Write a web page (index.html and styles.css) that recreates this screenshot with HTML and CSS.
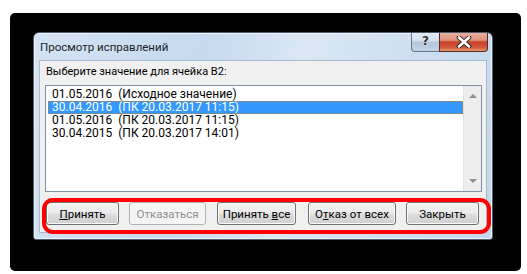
FILE: index.html
```html
<html>
<head>
  <title>Просмотр исправлений</title>
  <link rel="stylesheet" href="styles.css">
</head>
<body>
  <div class="backdrop">
    <div class="dialog">
      <div class="titlebar">
        <span class="title">Просмотр исправлений</span>
        <div class="caption-buttons">
          <div class="help-btn">?</div>
          <div class="close-btn">
            <svg width="20" height="12" viewBox="0 0 20 12">
              <path d="M5 1.5 L15 10.5 M15 1.5 L5 10.5" stroke="#3a2a2a" stroke-width="4.6" stroke-linecap="round"/>
              <path d="M5 1.5 L15 10.5 M15 1.5 L5 10.5" stroke="#ffffff" stroke-width="2.6" stroke-linecap="round"/>
            </svg>
          </div>
        </div>
      </div>

      <div class="panel">
        <div class="prompt">Выберите значение для ячейка B2:</div>
        <div class="listbox">
          <div class="items">
            <div class="item">01.05.2016&nbsp; (Исходное значение)</div>
            <div class="item selected">30.04.2016&nbsp; (ПК 20.03.2017 11:15)</div>
            <div class="item">01.05.2016&nbsp; (ПК 20.03.2017 11:15)</div>
            <div class="item">30.04.2015&nbsp; (ПК 20.03.2017 14:01)</div>
          </div>
          <div class="scrollbar">
            <span class="arrow up"></span>
            <span class="arrow down"></span>
          </div>
        </div>
        <div class="buttons">
          <button class="btn btn-accept"><u>П</u>ринять</button>
          <button class="btn btn-reject" disabled>Отказаться</button>
          <button class="btn btn-accept-all">Принять <u>в</u>се</button>
          <button class="btn btn-reject-all">О<u>т</u>каз от всех</button>
          <button class="btn btn-close">Закрыть</button>
        </div>
      </div>

      <div class="highlight-box"></div>
    </div>
  </div>
</body>
</html>
```

FILE: styles.css
```css
body {
  margin: 0;
  background-color: #ffffff;
  font-family: Roboto, "Noto Sans", sans-serif;
  font-size: 12px;
  color: #000000;
}

.backdrop {
  margin: 13px 0 0 10px;
  width: 488px;
  height: 239px;
  padding: 19px 0 0 23px;
  background-color: #000000;
  border-radius: 5px;
}

.dialog {
  position: relative;
  width: 458px;
  height: 206px;
  background: linear-gradient(100deg, #d4e3f3 0%, #c6d9ee 35%, #d9e7f5 55%, #c3d7ec 100%);
  border: 1px solid #4f5d6e;
  border-radius: 6px 6px 3px 3px;
  box-shadow: inset 0 0 0 1px #eef4fb;
}

.titlebar {
  display: flex;
  justify-content: space-between;
  height: 27px;
}

.title {
  padding: 6px 0 0 6px;
  font-size: 11.5px;
  line-height: 16px;
  color: #1e1e1e;
}

.caption-buttons {
  display: flex;
  margin-right: 4px;
  height: 18px;
}

.help-btn {
  width: 27px;
  height: 18px;
  border: 1px solid #66788e;
  border-top: none;
  border-right: none;
  border-radius: 0 0 0 4px;
  background: linear-gradient(#e3ebf4 0%, #d3dfec 45%, #b3c6dd 50%, #c4d4e6 100%);
  text-align: center;
  font-family: "DejaVu Sans", sans-serif;
  font-weight: bold;
  font-size: 12px;
  line-height: 17px;
  color: #2b2f38;
  text-shadow: 0 0 1px #ffffff, 0 0 1px #ffffff;
}

.close-btn {
  display: flex;
  align-items: center;
  justify-content: center;
  width: 47px;
  height: 18px;
  border: 1px solid #5a2a24;
  border-top: none;
  border-radius: 0 0 4px 0;
  background: linear-gradient(#eab2a2 0%, #e0907a 40%, #c8412b 50%, #d2583c 80%, #e59a6c 100%);
}

.panel {
  margin: 0 5px;
  height: 171px;
  padding: 0 5px;
  background-color: #f0f0f0;
  border: 1px solid #a9bacb;
}

.prompt {
  padding: 3px 0 0 1px;
  height: 21px;
  font-size: 11px;
  line-height: 16px;
}

.listbox {
  display: flex;
  width: 435px;
  height: 105px;
  background-color: #ffffff;
  border: 1px solid #828fa0;
}

.items {
  flex: 1;
  padding: 2px 0 0 2px;
}

.item {
  height: 13px;
  padding-left: 4px;
  font-size: 12px;
  line-height: 13px;
  white-space: pre;
}

.item.selected {
  background-color: #3399ff;
  color: #ffffff;
  outline: 1px dotted #c8762a;
  outline-offset: -1px;
}

.scrollbar {
  position: relative;
  width: 17px;
  background-color: #ededed;
  border-left: 1px solid #dde3ea;
}

.arrow {
  position: absolute;
  left: 5px;
  width: 0;
  height: 0;
  border-left: 4px solid transparent;
  border-right: 4px solid transparent;
}

.arrow.up {
  top: 8px;
  border-bottom: 4px solid #8a8f96;
}

.arrow.down {
  bottom: 8px;
  border-top: 4px solid #8a8f96;
}

.buttons {
  display: flex;
  gap: 10px;
  margin-top: 10px;
  padding-left: 1px;
}

.btn {
  height: 23px;
  padding: 0;
  font-family: Roboto, "Noto Sans", sans-serif;
  font-size: 11.5px;
  color: #000000;
  border: 1px solid #707070;
  border-radius: 3px;
  background: linear-gradient(#f2f2f2 0%, #ebebeb 48%, #dddddd 52%, #cfcfcf 100%);
  box-shadow: inset 0 0 0 1px #fbfbfb;
}

.btn:disabled {
  color: #8d8d8d;
  border-color: #adb2b5;
  background: #f4f4f4;
  box-shadow: none;
}

.btn-accept { width: 73px; }
.btn-reject { width: 77px; }
.btn-accept-all { width: 79px; margin-left: 1px; }
.btn-reject-all { width: 88px; margin-left: 2px; }
.btn-close { width: 73px; }

/* red annotation round the buttons */
.highlight-box {
  position: absolute;
  left: 8px;
  top: 165px;
  width: 441px;
  height: 28px;
  border: 4px solid #ff0000;
  border-radius: 11px;
}
```
